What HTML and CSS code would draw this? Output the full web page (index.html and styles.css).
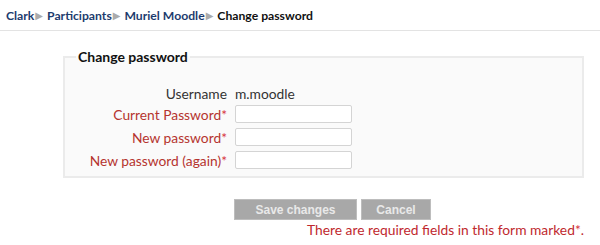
FILE: index.html
```html
<!DOCTYPE html>
<html>
<head>
<meta charset="utf-8">
<link rel="stylesheet" href="styles.css">
</head>
<body>
<div class="navbar">
  <a class="crumb">Clark</a><span class="sep">&#9654;</span>
  <a class="crumb">Participants</a><span class="sep">&#9654;</span>
  <a class="crumb">Muriel Moodle</a><span class="sep">&#9654;</span>
  <span class="current">Change password</span>
</div>
<div class="main">
  <fieldset class="box">
    <legend class="legend">Change password</legend>
    <div class="grid">
      <div class="label plain short">Username</div>
      <div class="value short">m.moodle</div>
      <div class="label req">Current Password<span class="star">*</span></div>
      <div class="value"><input class="field" type="password"></div>
      <div class="label req">New password<span class="star">*</span></div>
      <div class="value"><input class="field" type="password"></div>
      <div class="label req">New password (again)<span class="star">*</span></div>
      <div class="value"><input class="field" type="password"></div>
    </div>
  </fieldset>
  <div class="actions">
    <button class="btn save">Save changes</button>
    <button class="btn cancel">Cancel</button>
  </div>
  <div class="note">There are required fields in this form marked<span class="star">*</span>.</div>
</div>
</body>
</html>
```
FILE: styles.css
```css
html, body {
  margin: 0;
  padding: 0;
  background: #ffffff;
}
body {
  font-family: "Lato", "DejaVu Sans", sans-serif;
  font-size: 13.8px;
  color: #333;
}
.navbar {
  height: 30px;
  border-bottom: 1px solid #e3e3e3;
  padding-left: 6px;
  display: flex;
  align-items: center;
  font-size: 12.2px;
  font-weight: bold;
  white-space: nowrap;
}
.crumb {
  color: #1d3c6e;
}
.sep {
  color: #ababab;
  font-size: 10px;
  margin: 0 4px 0 1px;
}
.current {
  color: #111;
}
.main {
  padding-top: 17px;
}
.box {
  margin: 0 16px 0 63px;
  border: 2px solid #ebebeb;
  background: #fafafa;
  padding: 0 0 7px 11px;
  min-width: 0;
}
.legend {
  font-weight: bold;
  font-size: 14px;
  color: #111;
  padding: 0 2px;
}
.grid {
  display: grid;
  grid-template-columns: 151px auto;
  column-gap: 8px;
  row-gap: 5px;
  padding-top: 23px;
  align-items: center;
}
.short {
  line-height: 12px;
}
.label {
  text-align: right;
  white-space: nowrap;
}
.plain { color: #333; }
.req { color: #b5342f; }
.star { color: #d8323a; }
.value { color: #333; }
.field {
  display: block;
  box-sizing: border-box;
  width: 117px;
  height: 18px;
  border: 1px solid #d4d4d4;
  border-radius: 2px;
  background: #fff;
  margin: 0;
}
.actions {
  display: flex;
  gap: 4px;
  padding-left: 234px;
  margin-top: 21px;
}
.btn {
  font-family: "Liberation Sans", Arial, sans-serif;
  font-weight: bold;
  font-size: 12px;
  color: #e9e9e9;
  background: #a8a8a8;
  border: 1px solid #bdbdbd;
  height: 21px;
  padding: 0;
}
.save { width: 123px; }
.cancel { width: 70px; }
.note {
  color: #c0282e;
  padding-left: 307px;
  margin-top: 1px;
  white-space: nowrap;
}
```
